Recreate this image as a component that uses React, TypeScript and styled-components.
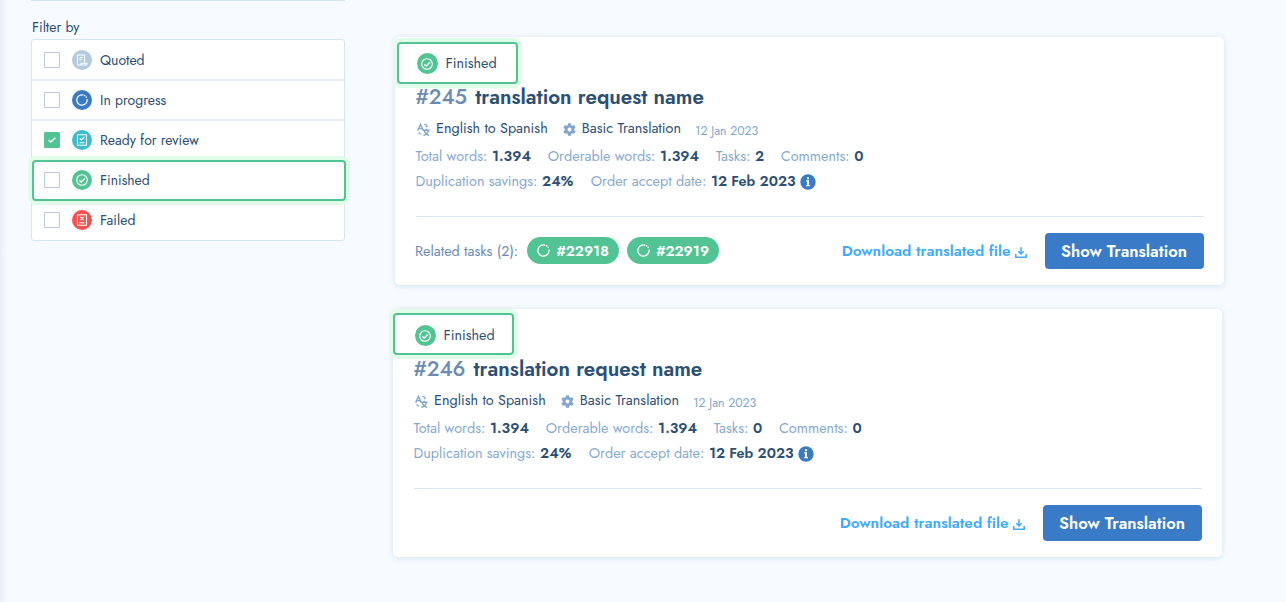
import React, { useState } from "react";
import styled, { createGlobalStyle } from "styled-components";

type Status = "quoted" | "progress" | "review" | "finished" | "failed";

type TranslationRequest = {
  id: string;
  name: string;
  tasks: number;
  comments: number;
  related: string[];
};

const statuses: { key: Status; label: string }[] = [
  { key: "quoted", label: "Quoted" },
  { key: "progress", label: "In progress" },
  { key: "review", label: "Ready for review" },
  { key: "finished", label: "Finished" },
  { key: "failed", label: "Failed" },
];

const statusColors: Record<Status, string> = {
  quoted: "#b3cae0",
  progress: "#3a7bc8",
  review: "#3bbcd0",
  finished: "#52c393",
  failed: "#f8504f",
};

const requests: TranslationRequest[] = [
  {
    id: "#245",
    name: "translation request name",
    tasks: 2,
    comments: 0,
    related: ["#22918", "#22919"],
  },
  {
    id: "#246",
    name: "translation request name",
    tasks: 0,
    comments: 0,
    related: [],
  },
];

const ProgressRing: React.FC<{ size: number }> = ({ size }) => (
  <svg width={size} height={size} viewBox="0 0 12 12" fill="none" stroke="#fff" strokeWidth="1.2">
    <path d="M11.1 5.2A5.2 5.2 0 1 1 6 .8" />
    <path d="M6 .8a5.2 5.2 0 0 1 4.8 3.2" strokeDasharray="1.5 .6" />
  </svg>
);

const StatusGlyph: React.FC<{ status: Status }> = ({ status }) => {
  if (status === "progress") {
    return <ProgressRing size={12} />;
  }
  return (
    <svg width="12" height="12" viewBox="0 0 12 12" fill="none" stroke="#fff" strokeWidth="1.1">
      {status === "quoted" && (
        <>
          <path d="M1.5 9V1h7v7.5" />
          <path d="M1.5 8.5v1.2c0 .8.4 1.3 1.2 1.3h7c.9 0 1.3-.5 1.3-1.7H5.2c0 1.1-.4 1.7-1.3 1.7" />
          <path d="M3.3 3.6H6.7M3.3 5.8h2.2" />
        </>
      )}
      {status === "review" && (
        <>
          <path d="M1.5 .8h9v10.4h-9z" />
          <path d="M3.8 4.3l1.6 1.6 3-3M3.5 8.7h5" />
        </>
      )}
      {status === "finished" && (
        <>
          <circle cx="6" cy="6" r="5.3" />
          <path d="M3.3 6.2l1.9 1.9 3.7-3.8" strokeWidth="1.3" />
        </>
      )}
      {status === "failed" && (
        <>
          <path d="M1.5 .8h9v10.4h-9z" />
          <path d="M4.4 2.9l3.2 3.2M7.6 2.9L4.4 6.1M3.5 8.7h5" />
        </>
      )}
    </svg>
  );
};

const TranslateIcon: React.FC = () => (
  <svg width="13" height="13" viewBox="0 0 13 13" fill="none" stroke="#83a6cb" strokeWidth="1.4">
    <path d="M.7 7.6L3.5 1.4l2.8 6.2M1.5 5.6h4" />
    <path d="M6 7.3h6.6M9.3 5.8v1.5M7.2 7.5c.6 2.2 2.4 4 5 4.9M11.5 7.5c-.6 2.2-2.5 4-5.1 4.9" />
    <path d="M7.2 1.6h2.4v2.2M8.5 3l1.1 1.1L10.8 3M2 8.9v2h2.6" strokeWidth="1" />
  </svg>
);

const GearIcon: React.FC = () => (
  <svg width="13" height="13" viewBox="2 2 20 20" fill="#83a6cb">
    <path d="M19.14 12.94c.04-.3.06-.61.06-.94 0-.32-.02-.64-.07-.94l2.03-1.58a.49.49 0 0 0 .12-.61l-1.92-3.32a.488.488 0 0 0-.59-.22l-2.39.96c-.5-.38-1.03-.7-1.62-.94l-.36-2.54a.484.484 0 0 0-.48-.41h-3.84c-.24 0-.43.17-.47.41l-.36 2.54c-.59.24-1.13.57-1.62.94l-2.39-.96c-.22-.08-.47 0-.59.22L2.74 8.87c-.12.21-.08.47.12.61l2.03 1.58c-.05.3-.09.63-.09.94s.02.64.07.94l-2.03 1.58a.49.49 0 0 0-.12.61l1.92 3.32c.12.22.37.29.59.22l2.39-.96c.5.38 1.03.7 1.62.94l.36 2.54c.05.24.24.41.48.41h3.84c.24 0 .44-.17.47-.41l.36-2.54c.59-.24 1.13-.56 1.62-.94l2.39.96c.22.08.47 0 .59-.22l1.92-3.32c.12-.22.07-.47-.12-.61l-2.01-1.58zM12 15.1A3.1 3.1 0 1 1 12 8.9a3.1 3.1 0 0 1 0 6.2z" />
  </svg>
);

const InfoIcon: React.FC = () => (
  <svg width="16" height="16" viewBox="0 0 16 16">
    <circle cx="8" cy="8" r="7.7" fill="#3a7bc8" />
    <path d="M7 3.2h2v2H7zM6.1 6.3H9v4.6h1v1.3H6v-1.3h1V7.6h-.9z" fill="#fff" />
  </svg>
);

const DownloadIcon: React.FC = () => (
  <svg width="12" height="11" viewBox="0 0 12 11" fill="none" stroke="#40aafb" strokeWidth="1.5">
    <path d="M6 .2v6.4M3.3 4.2L6 6.9l2.7-2.7" />
    <path d="M.8 7v3.2h10.4V7" />
  </svg>
);

const RequestCard: React.FC<{ request: TranslationRequest; shift: number }> = ({
  request,
  shift,
}) => (
  <Card $shift={shift}>
    <CardStatus>
      <StatusIcon $status="finished" $size={21}>
        <StatusGlyph status="finished" />
      </StatusIcon>
      Finished
    </CardStatus>
    <StatusHighlight $left={shift ? 0 : 2} $top={shift ? 4 : 5} />
    <Title>
      <RequestId>{request.id}</RequestId>
      {request.name}
    </Title>
    <Meta>
      <MetaItem>
        <TranslateIcon />
        English to Spanish
      </MetaItem>
      <MetaItem>
        <GearIcon />
        Basic Translation
      </MetaItem>
      <CreatedAt>12 Jan 2023</CreatedAt>
    </Meta>
    <Stats>
      <Stat>
        Total words: <b>1.394</b>
      </Stat>
      <Stat>
        Orderable words: <b>1.394</b>
      </Stat>
      <Stat>
        Tasks: <b>{request.tasks}</b>
      </Stat>
      <Stat>
        Comments: <b>{request.comments}</b>
      </Stat>
    </Stats>
    <Stats>
      <Stat>
        Duplication savings: <b>24%</b>
      </Stat>
      <Stat>
        Order accept date: <b>12 Feb 2023</b>
        <InfoIcon />
      </Stat>
    </Stats>
    <CardFooter>
      {request.related.length > 0 && (
        <Related>
          <span>Related tasks ({request.related.length}):</span>
          <TaskList>
            {request.related.map((task) => (
              <TaskPill key={task}>
                <ProgressRing size={13} />
                {task}
              </TaskPill>
            ))}
          </TaskList>
        </Related>
      )}
      <Actions>
        <DownloadLink>
          Download translated file
          <DownloadIcon />
        </DownloadLink>
        <ShowButton>Show Translation</ShowButton>
      </Actions>
    </CardFooter>
  </Card>
);

const App: React.FC = () => {
  const [checked, setChecked] = useState<Status[]>(["review"]);

  const onToggle = (key: Status) => {
    setChecked(
      checked.includes(key) ? checked.filter((c) => c !== key) : [...checked, key]
    );
  };

  return (
    <>
      <GlobalStyle />
      <Page>
        <Sidebar>
          <PanelEnd />
          <FilterTitle>Filter by</FilterTitle>
          <FilterList>
            {statuses.map(({ key, label }) => (
              <FilterRow
                key={key}
                $active={key === "finished"}
                onClick={() => onToggle(key)}
              >
                <Checkbox $checked={checked.includes(key)}>
                  {checked.includes(key) && (
                    <svg width="8" height="8" viewBox="0 0 8 8" fill="none" stroke="#fff" strokeWidth="1.4">
                      <path d="M.6 4l2.2 2.1L7.3 1.7" />
                    </svg>
                  )}
                </Checkbox>
                <StatusIcon $status={key} $size={20}>
                  <StatusGlyph status={key} />
                </StatusIcon>
                {label}
              </FilterRow>
            ))}
          </FilterList>
        </Sidebar>
        <Results>
          {requests.map((request, i) => (
            <RequestCard key={request.id} request={request} shift={i * 2} />
          ))}
        </Results>
      </Page>
    </>
  );
};

const GlobalStyle = createGlobalStyle`
  * {
    box-sizing: border-box;
  }
  body {
    margin: 0;
    background: #f7fbff;
    color: #2c4f73;
    font-family: Jost, Lato, sans-serif;
    font-size: 14px;
  }
  svg {
    display: block;
    flex: none;
  }
`;

const Page = styled.div`
  display: flex;
  height: 602px;
  padding-left: 31px;
  overflow: hidden;
  background: linear-gradient(to right, #e7eef7 0, #f7fbff 7px);
`;

const Sidebar = styled.aside`
  width: 314px;
  margin-right: 50px;
`;

const PanelEnd = styled.div`
  height: 1px;
  background: #d5e5f1;
`;

const FilterTitle = styled.div`
  height: 38px;
  padding: 16px 0 0 1px;
  line-height: 20px;
`;

const FilterList = styled.div`
  height: 202px;
  border: 1px solid #d5e5f1;
  border-radius: 3px;
  background: #fff;
`;

const FilterRow = styled.div<{ $active: boolean }>`
  position: relative;
  display: flex;
  align-items: center;
  height: 40px;
  padding-left: 12px;
  cursor: pointer;

  & + & {
    box-shadow: inset 0 1px #e7eff6, 0 -1px #e7eff6;
  }

  ${(p) =>
    p.$active &&
    `
    z-index: 1;
    &::after {
      content: "";
      position: absolute;
      inset: 0 -2px -1px 0;
      border: 2px solid #52c393;
      border-radius: 4px;
      box-shadow: 0 0 0 4px #e0fde7;
    }
  `}
`;

const Checkbox = styled.span<{ $checked: boolean }>`
  display: flex;
  align-items: center;
  justify-content: center;
  width: 16px;
  height: 16px;
  margin-right: 12px;
  border: 1px solid ${(p) => (p.$checked ? "#52c393" : "#b7c8d9")};
  border-radius: 1px;
  background: ${(p) => (p.$checked ? "#52c393" : "#fff")};
`;

const StatusIcon = styled.span<{ $status: Status; $size: number }>`
  display: flex;
  align-items: center;
  justify-content: center;
  width: ${(p) => p.$size}px;
  height: ${(p) => p.$size}px;
  margin-right: 8px;
  border-radius: 50%;
  background: ${(p) => statusColors[p.$status]};
`;

const Results = styled.main`
  display: flex;
  flex-direction: column;
  gap: 24px;
  padding-top: 37px;
`;

const Card = styled.section<{ $shift: number }>`
  position: relative;
  width: 829px;
  height: 248px;
  margin-left: -${(p) => p.$shift}px;
  padding: 16px 20.5px 0;
  border-radius: 5px;
  background: #fff;
  box-shadow: 0 1px 7px rgba(58, 110, 155, 0.18);
`;

const CardStatus = styled.div`
  display: flex;
  align-items: flex-start;
  height: 21px;
  padding-left: 1px;
  font-size: 14.4px;
  line-height: 20px;
`;

const StatusHighlight = styled.div<{ $left: number; $top: number }>`
  position: absolute;
  left: ${(p) => p.$left}px;
  top: ${(p) => p.$top}px;
  width: 121px;
  height: 42px;
  border: 2px solid #52c393;
  border-radius: 4px;
  box-shadow: 0 0 0 4px #e0fde7;
`;

const Title = styled.h2`
  position: relative;
  display: flex;
  align-items: baseline;
  gap: 8px;
  margin: 8px 0 0;
  font-size: 20.6px;
  font-weight: 600;
  line-height: 30px;
`;

const RequestId = styled.span`
  color: #6b8cb0;
  font-size: 21px;
  font-weight: 500;
`;

const Meta = styled.div`
  display: flex;
  gap: 14px;
  height: 24px;
  margin-top: 4px;
  padding-left: 0.5px;
  font-size: 14.4px;
  line-height: 24px;
`;

const MetaItem = styled.div`
  display: flex;
  align-items: center;
  gap: 6px;

  svg {
    margin: 3px 0 0 1px;
  }
`;

const CreatedAt = styled.span`
  padding-top: 3px;
  color: #83a6cb;
  font-size: 12.3px;
`;

const Stats = styled.div`
  display: flex;
  gap: 16.8px;
  height: 25px;
  margin-top: 4px;
  font-size: 14.4px;
  line-height: 25px;

  & + & {
    gap: 17.5px;
    margin-top: 0;
  }
`;

const Stat = styled.div`
  display: flex;
  align-items: center;
  gap: 4.7px;
  color: #87aacf;

  b {
    color: #2c4f73;
    font-weight: 600;
  }
`;

const CardFooter = styled.div`
  display: flex;
  align-items: center;
  height: 69px;
  margin-top: 22px;
  border-top: 1px solid #d9e5ef;
`;

const Related = styled.div`
  display: flex;
  align-items: center;
  gap: 9px;
  margin: -1px 0 0 -0.5px;
  color: #6b8cb0;
  font-size: 14.4px;
`;

const TaskList = styled.div`
  display: flex;
  gap: 8px;
`;

const TaskPill = styled.span`
  display: flex;
  align-items: center;
  justify-content: center;
  gap: 6px;
  width: 92px;
  height: 27px;
  border-radius: 14px;
  background: #52c393;
  color: #fff;
  font-weight: 600;
`;

const Actions = styled.div`
  display: flex;
  align-items: center;
  gap: 18px;
  margin-left: auto;
`;

const DownloadLink = styled.a`
  display: flex;
  align-items: center;
  gap: 4px;
  color: #40aafb;
  font-size: 15.4px;
  font-weight: 600;

  svg {
    margin-top: 2px;
  }
`;

const ShowButton = styled.button`
  width: 159px;
  height: 36px;
  padding: 0;
  border: 0;
  border-radius: 4px;
  background: #3a7bc8;
  color: #fff;
  font-family: inherit;
  font-size: 16.6px;
  font-weight: 600;
`;

export default App;
